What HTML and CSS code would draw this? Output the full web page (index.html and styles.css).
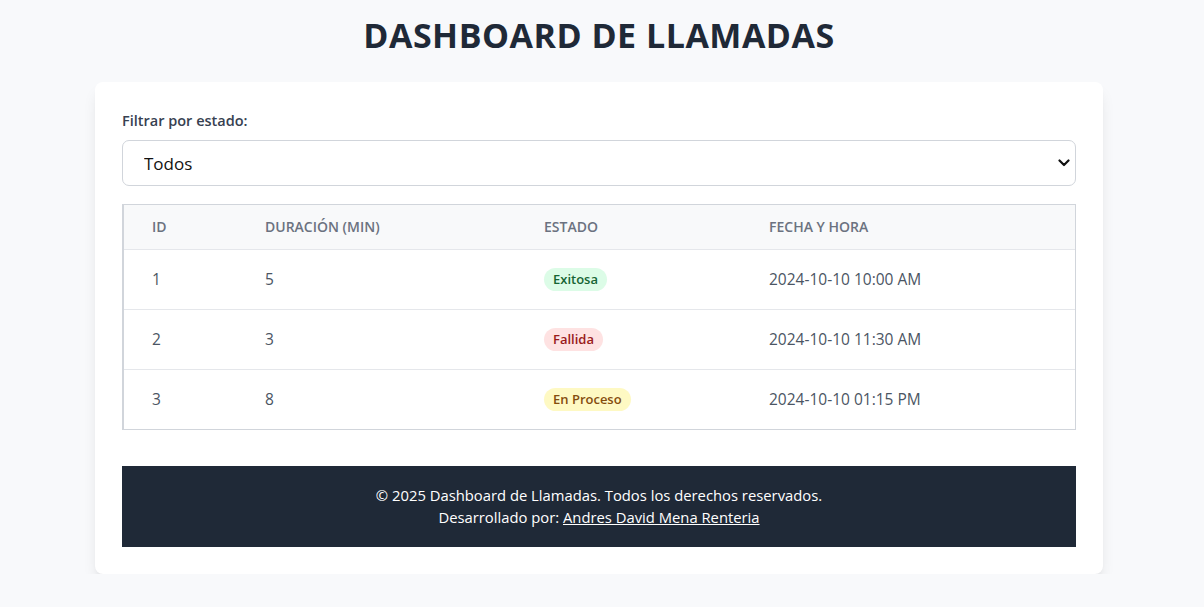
FILE: index.html
```html
<!DOCTYPE html>
<html lang="es">
<head>
<meta charset="utf-8">
<title>Dashboard de Llamadas</title>
<link rel="stylesheet" href="styles.css">
</head>
<body>
<main class="page">
  <h1 class="title">DASHBOARD DE LLAMADAS</h1>
  <section class="card">
    <label class="filter-label" for="estado">Filtrar por estado:</label>
    <div class="select-wrap">
      <select id="estado" class="select">
        <option>Todos</option>
        <option>Exitosa</option>
        <option>Fallida</option>
        <option>En Proceso</option>
      </select>
      <svg class="chevron" width="12" height="8" viewBox="0 0 12 8" aria-hidden="true"><path d="M1.5 1.5 L6 6 L10.5 1.5" fill="none" stroke="#111" stroke-width="2.2" stroke-linecap="round" stroke-linejoin="round"/></svg>
    </div>
    <div class="table-wrap">
      <table class="calls">
        <colgroup>
          <col class="c-id"><col class="c-dur"><col class="c-est"><col class="c-fecha">
        </colgroup>
        <thead>
          <tr><th>ID</th><th>Duración (min)</th><th>Estado</th><th>Fecha y Hora</th></tr>
        </thead>
        <tbody>
          <tr><td>1</td><td>5</td><td><span class="badge ok">Exitosa</span></td><td>2024-10-10 10:00 AM</td></tr>
          <tr><td>2</td><td>3</td><td><span class="badge fail">Fallida</span></td><td>2024-10-10 11:30 AM</td></tr>
          <tr><td>3</td><td>8</td><td><span class="badge prog">En Proceso</span></td><td>2024-10-10 01:15 PM</td></tr>
        </tbody>
      </table>
    </div>
    <footer class="footer">
      <p>© 2025 Dashboard de Llamadas. Todos los derechos reservados.</p>
      <p>Desarrollado por: <a href="#" class="author">Andres David Mena Renteria</a></p>
    </footer>
  </section>
</main>
</body>
</html>
```
FILE: styles.css
```css
* { box-sizing: border-box; }
html, body { margin: 0; padding: 0; }
body {
  background: #f8f9fb;
  font-family: "Open Sans", "Noto Sans", sans-serif;
  color: #374151;
}
.page {
  padding: 15px 6px 0 0;
  display: flex;
  flex-direction: column;
  align-items: center;
}
.title {
  margin: 0 0 27px;
  font-size: 34px;
  line-height: 40px;
  font-weight: 700;
  color: #1f2937;
  letter-spacing: 0.5px;
}
.card {
  width: 1008px;
  background: #fff;
  border-radius: 8px;
  box-shadow: 0 10px 15px -3px rgba(0,0,0,0.1), 0 4px 6px -4px rgba(0,0,0,0.08);
  padding: 27px;
  display: flex;
  flex-direction: column;
}
.filter-label {
  font-size: 14.5px;
  line-height: 24px;
  font-weight: 600;
  color: #374151;
  margin-bottom: 7px;
}
.select-wrap { position: relative; }
.select {
  appearance: none;
  -webkit-appearance: none;
  width: 100%;
  height: 46px;
  border: 1px solid #d1d5db;
  border-radius: 7px;
  background: #fff;
  padding: 0 0 0 21px;
  font-family: inherit;
  font-size: 17px;
  color: #111;
}
.chevron {
  position: absolute;
  right: 6px;
  top: 19px;
  pointer-events: none;
}
.table-wrap {
  margin-top: 18px;
  border: 1px solid #d1d5db;
  border-left-width: 2px;
}
.calls {
  width: 100%;
  border-collapse: collapse;
  table-layout: fixed;
}
.c-id { width: 113px; }
.c-dur { width: 279px; }
.c-est { width: 225px; }
.calls th {
  background: #f8f9fa;
  height: 44px;
  text-align: left;
  padding: 0 28px;
  font-size: 14px;
  font-weight: 600;
  text-transform: uppercase;
  color: #6b7280;
  border-bottom: 1px solid #e5e7eb;
}
.calls td {
  height: 60px;
  padding: 0 28px;
  font-size: 15.5px;
  color: #4b5563;
  border-bottom: 1px solid #e5e7eb;
}
.calls tbody tr:last-child td { border-bottom: none; }
.badge {
  display: inline-block;
  padding: 0 9px;
  border-radius: 999px;
  font-size: 13px;
  line-height: 23px;
  font-weight: 600;
}
.ok { background: #dcfce7; color: #166534; }
.fail { background: #fee2e2; color: #991b1b; }
.prog { background: #fef9c3; color: #854d0e; }
.footer {
  margin-top: 36px;
  background: #1f2937;
  color: #fff;
  text-align: center;
  padding: 18px 16px 19px;
  font-size: 14.8px;
  line-height: 22px;
}
.footer p { margin: 0; }
.author { color: #fff; text-decoration: underline; }
```
